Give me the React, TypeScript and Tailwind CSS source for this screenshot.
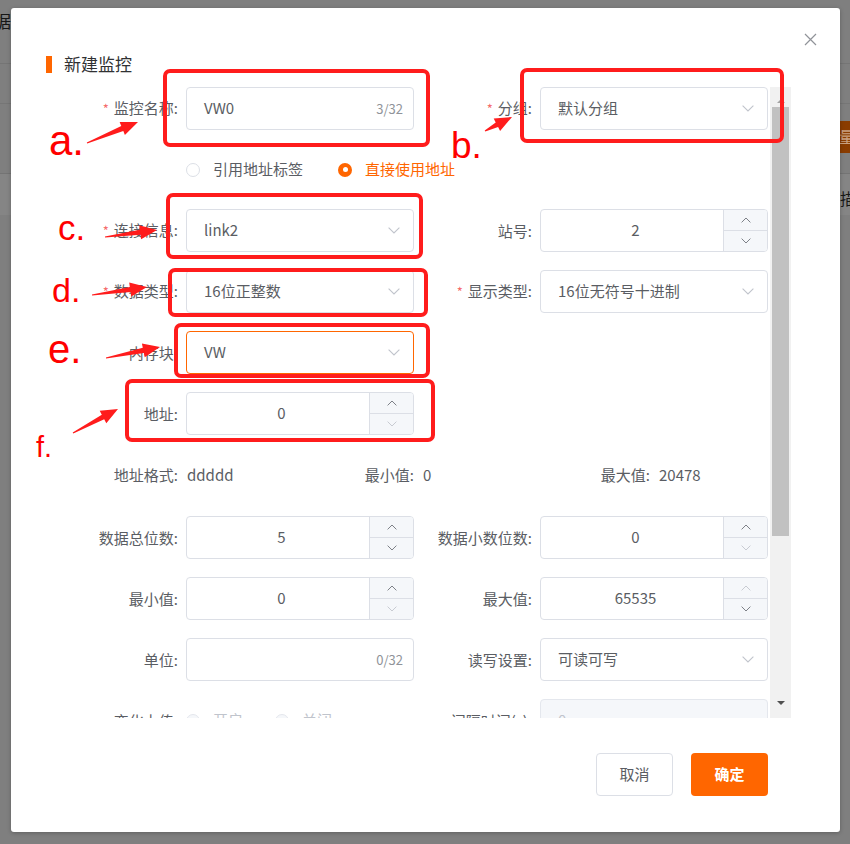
import React from "react";

const font = "font-['Noto_Sans_CJK_SC',sans-serif]";

function Chevron({ color = "#c0c4cc" }: { color?: string }) {
  return (
    <svg width="12" height="7" viewBox="0 0 12 7" fill="none">
      <polyline points="0.6,0.6 6,6 11.4,0.6" stroke={color} strokeWidth="1.1" />
    </svg>
  );
}

function SmallArrow({ up, light }: { up?: boolean; light?: boolean }) {
  return (
    <svg width="10" height="6" viewBox="0 0 10 6" fill="none">
      <polyline
        points={up ? "0.6,5.4 5,1 9.4,5.4" : "0.6,0.6 5,5 9.4,0.6"}
        stroke={light ? "#c8cbd2" : "#7d8087"}
        strokeWidth="1"
      />
    </svg>
  );
}

function Label({ text, req, right }: { text: string; req?: boolean; right?: boolean }) {
  return (
    <div
      className={`${right ? "w-[126px]" : "w-[175px]"} shrink-0 pr-2 text-right text-[15px] leading-[20px] text-[#5a5d63]`}
    >
      {req && <span className="mr-[5px] text-[13px] text-[#f56c6c]">*</span>}
      {text}
    </div>
  );
}

function TextInput({ value, count }: { value: string; count: string }) {
  return (
    <div className="flex h-[43px] w-[228px] shrink-0 items-center rounded-[4px] border border-[#dcdfe6] bg-white pl-[17px] pr-[10px]">
      <span className="flex-1 text-[15px] text-[#5a5d63]">{value}</span>
      <span className="text-[13px] text-[#909399]">{count}</span>
    </div>
  );
}

function Select({ value, focused }: { value: string; focused?: boolean }) {
  return (
    <div
      className={`flex h-[43px] w-[228px] shrink-0 items-center rounded-[4px] border bg-white pl-[17px] pr-[13px] ${
        focused ? "border-[#ff6600]" : "border-[#dcdfe6]"
      }`}
    >
      <span className="flex-1 text-[15px] text-[#5a5d63]">{value}</span>
      <Chevron />
    </div>
  );
}

function NumberInput({ value, upOff, downOff }: { value: string; upOff?: boolean; downOff?: boolean }) {
  return (
    <div className="flex h-[43px] w-[228px] shrink-0 overflow-hidden rounded-[4px] border border-[#dcdfe6] bg-white">
      <div className="flex flex-1 items-center justify-center pl-[7px] text-[15px] text-[#5a5d63]">{value}</div>
      <div className="flex w-[44px] flex-col border-l border-[#dcdfe6] bg-[#f5f7fa]">
        <div className="flex flex-1 items-center justify-center border-b border-[#dcdfe6]">
          <SmallArrow up light={upOff} />
        </div>
        <div className="flex flex-1 items-center justify-center">
          <SmallArrow light={downOff} />
        </div>
      </div>
    </div>
  );
}

function Radio({ label, checked, disabled }: { label: string; checked?: boolean; disabled?: boolean }) {
  return (
    <div className="flex items-center">
      {checked ? (
        <span className="flex h-[14px] w-[14px] items-center justify-center rounded-full bg-[#ff6600]">
          <span className="h-[5px] w-[5px] rounded-full bg-white" />
        </span>
      ) : (
        <span
          className={`h-[14px] w-[14px] rounded-full border ${disabled ? "border-[#e4e7ed] bg-[#f5f7fa]" : "border-[#dcdfe6] bg-white"}`}
        />
      )}
      <span
        className={`ml-[13px] text-[15px] ${checked ? "text-[#ff6600]" : disabled ? "text-[#c0c4cc]" : "text-[#5a5d63]"}`}
      >
        {label}
      </span>
    </div>
  );
}

function Row({ children }: { children: React.ReactNode }) {
  return <div className="flex h-[43px] shrink-0 items-center">{children}</div>;
}

function Info({ label, value }: { label: string; value: string }) {
  return (
    <div className="flex w-[236px] items-center text-[15px] text-[#5a5d63]">
      <span className="w-[167px] text-right">{label}</span>
      <span className="pl-[9px]">{value}</span>
    </div>
  );
}

function arrow(tx: number, ty: number, px: number, py: number) {
  const dx = px - tx;
  const dy = py - ty;
  const len = Math.hypot(dx, dy);
  const ux = dx / len;
  const uy = dy / len;
  const nx = -uy;
  const ny = ux;
  const head = 17;
  const bx = px - ux * head;
  const by = py - uy * head;
  const p = (x: number, y: number) => `${x.toFixed(1)},${y.toFixed(1)}`;
  return [
    p(tx + nx * 0.6, ty + ny * 0.6),
    p(bx + nx * 2.6, by + ny * 2.6),
    p(bx + nx * 7, by + ny * 7),
    p(px, py),
    p(bx - nx * 7, by - ny * 7),
    p(bx - nx * 2.6, by - ny * 2.6),
    p(tx - nx * 0.6, ty - ny * 0.6),
  ].join(" ");
}

const boxes = [
  [165, 71, 263, 74],
  [522, 70, 260, 71],
  [168, 195, 253, 62],
  [170, 270, 256, 45],
  [176, 325, 252, 51],
  [127, 381, 306, 59],
];

const arrows = [
  [87, 143, 138, 122],
  [485, 131, 512, 117],
  [105, 237, 157, 230],
  [92, 295, 147, 287],
  [106, 358, 160, 347],
  [73, 433, 118, 409],
];

const letters: [string, number, number, number][] = [
  ["a.", 49, 155, 42],
  ["b.", 451, 158, 37],
  ["c.", 58, 240, 35],
  ["d.", 52, 302, 34],
  ["e.", 48, 363, 40],
  ["f.", 36, 457, 29],
];

export default function App() {
  return (
    <div className={`relative h-[844px] w-[850px] overflow-hidden bg-[#7f7f7f] ${font}`}>
      {/* page behind the overlay */}
      <div className="flex h-[64px] border-b border-[#757575]">
        <span className="ml-[-6px] mt-[11px] text-[17px] leading-[20px] text-[#161616]">据</span>
      </div>
      <div className="h-[40px] border-b border-[#767676]" />
      <div className="flex justify-end pt-[17px]">
        <div className="h-[32px] w-[12px] overflow-hidden bg-[#8a3c00] pl-[1px] pt-[5px] text-[16px] leading-[20px] text-[#c9a080]">
          量
        </div>
      </div>
      <div className="mt-[20px] flex h-[42px] justify-end border-t border-[#747474] bg-[#858585]">
        <span className="mr-[-6px] mt-[14px] text-[16px] leading-[20px] text-[#161616]">描</span>
      </div>

      {/* dialog */}
      <div className="absolute left-[11px] top-[8px] flex h-[824px] w-[829px] flex-col rounded-[3px] bg-white shadow-[0_1px_4px_rgba(0,0,0,0.25)]">
        <div className="flex h-[79px] shrink-0 justify-between">
          <div className="flex items-center pl-[35px] pt-[33px]">
            <span className="h-[17px] w-[6px] bg-[#ff6600]" />
            <span className="ml-[12px] text-[17px] leading-[18px] text-[#303133]">新建监控</span>
          </div>
          <div className="pr-[23px] pt-[25px]">
            <svg width="13" height="13" viewBox="0 0 13 13" fill="none">
              <path d="M1 1L12 12M12 1L1 12" stroke="#909399" strokeWidth="1.2" />
            </svg>
          </div>
        </div>

        <div className="flex h-[631px] shrink-0">
          <div className="flex w-[758px] flex-col overflow-hidden">
            <Row>
              <Label text="监控名称:" req />
              <TextInput value="VW0" count="3/32" />
              <Label text="分组:" req right />
              <Select value="默认分组" />
            </Row>
            <div className="flex h-[79px] shrink-0 items-center pl-[175px]">
              <Radio label="引用地址标签" />
              <div className="ml-[35px]">
                <Radio label="直接使用地址" checked />
              </div>
            </div>
            <div className="flex flex-col gap-[18px]">
              <Row>
                <Label text="连接信息:" req />
                <Select value="link2" />
                <Label text="站号:" right />
                <NumberInput value="2" />
              </Row>
              <Row>
                <Label text="数据类型:" req />
                <Select value="16位正整数" />
                <Label text="显示类型:" req right />
                <Select value="16位无符号十进制" />
              </Row>
              <Row>
                <Label text="内存块:" />
                <Select value="VW" focused />
              </Row>
              <Row>
                <Label text="地址:" />
                <NumberInput value="0" downOff />
              </Row>
            </div>
            <div className="flex h-[81px] shrink-0 items-center">
              <Info label="地址格式:" value="ddddd" />
              <Info label="最小值:" value="0" />
              <Info label="最大值:" value="20478" />
            </div>
            <div className="flex flex-col gap-[18px]">
              <Row>
                <Label text="数据总位数:" />
                <NumberInput value="5" />
                <Label text="数据小数位数:" right />
                <NumberInput value="0" downOff />
              </Row>
              <Row>
                <Label text="最小值:" />
                <NumberInput value="0" downOff />
                <Label text="最大值:" right />
                <NumberInput value="65535" upOff />
              </Row>
              <Row>
                <Label text="单位:" />
                <TextInput value="" count="0/32" />
                <Label text="读写设置:" right />
                <Select value="可读可写" />
              </Row>
              <Row>
                <Label text="变化上传:" />
                <div className="flex w-[228px] shrink-0 items-center">
                  <Radio label="开启" disabled />
                  <div className="ml-[32px]">
                    <Radio label="关闭" disabled />
                  </div>
                </div>
                <Label text="间隔时间(s):" right />
                <div className="flex h-[43px] w-[228px] shrink-0 items-center rounded-[4px] border border-[#e4e7ed] bg-[#f5f7fa] pl-[17px] text-[15px] text-[#c0c4cc]">
                  0
                </div>
              </Row>
            </div>
          </div>

          {/* scrollbar */}
          <div className="ml-px flex w-[21px] flex-col bg-[#f1f1f1]">
            <div className="flex h-[20px] items-end justify-center pb-[4px]">
              <span className="h-0 w-0 border-x-[4px] border-b-[4px] border-x-transparent border-b-[#a3a3a3]" />
            </div>
            <div className="mx-[2px] h-[429px] bg-[#c1c1c1]" />
            <div className="flex-1" />
            <div className="flex h-[20px] items-start justify-center pt-[3px]">
              <span className="h-0 w-0 border-x-[4px] border-t-[4px] border-x-transparent border-t-[#505050]" />
            </div>
          </div>
        </div>

        <div className="flex flex-1 items-start justify-end gap-[18px] pr-[72px] pt-[35px]">
          <button className="h-[43px] w-[77px] rounded-[4px] border border-[#dcdfe6] bg-white text-[15px] text-[#5a5d63]">
            取消
          </button>
          <button className="h-[43px] w-[77px] rounded-[4px] bg-[#ff6600] text-[15px] font-bold text-white">
            确定
          </button>
        </div>
      </div>

      {/* red annotations */}
      <svg className="pointer-events-none absolute left-0 top-0" width="850" height="844">
        {boxes.map(([x, y, w, h], i) => (
          <rect key={i} x={x} y={y} width={w} height={h} rx="5" fill="none" stroke="#ff1c1c" strokeWidth="4" />
        ))}
        {arrows.map(([a, b, c, d], i) => (
          <polygon key={i} points={arrow(a, b, c, d)} fill="#ff1c1c" />
        ))}
        {letters.map(([t, x, y, s]) => (
          <text key={t} x={x} y={y} fontSize={s} fill="#ff0000" fontFamily="'Liberation Sans', Arial, sans-serif">
            {t}
          </text>
        ))}
      </svg>
    </div>
  );
}
